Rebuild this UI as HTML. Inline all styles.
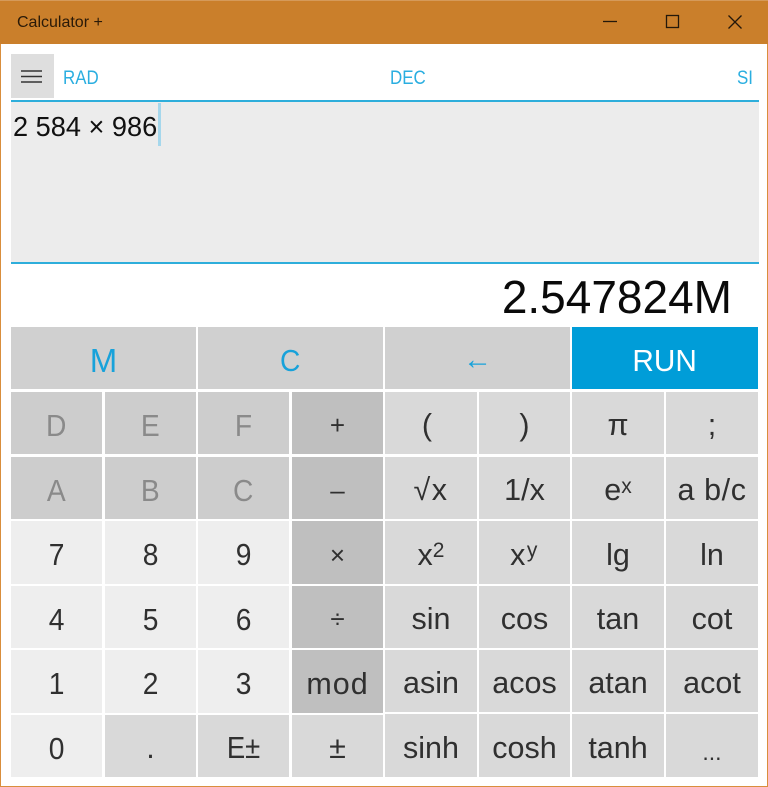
<!DOCTYPE html>
<html><head><meta charset="utf-8">
<style>
html,body{margin:0;padding:0;background:#fff}
body{width:768px;height:787px;position:relative;overflow:hidden;font-family:"Liberation Sans",sans-serif;color:#1a1a1a}
div{position:absolute;box-sizing:border-box}
.b{display:flex;align-items:center;justify-content:center;font-size:30.500px;white-space:nowrap;color:#303030;padding-top:5px}
.g{background:#d9d9d9}.l{background:#eeeeee}.d{background:#bfbfbf}.h{background:#cdcdcd}.m{background:#d0d0d0;color:#18a2da}
.h{color:#8a8a8a}
.o{font-size:26px}
.s{display:inline-block;font-size:31px;transform:scaleX(.91)}
sup{font-size:21px;line-height:0;position:relative;top:-4px;vertical-align:super}
.t{color:#2aaee0;font-size:19px;line-height:24px;transform-origin:0 50%;transform:scaleX(.89)}
.c1{left:11px;width:91px}.c2{left:105px;width:91px}.c3{left:198px;width:91px}.c4{left:292px;width:91px}
.c5{left:385px;width:92px}.c6{left:479px;width:91px}.c7{left:572px;width:92px}.c8{left:666px;width:92px}
.r1{top:392px;height:62px}.r2{top:457px;height:62px}.r3{top:521px;height:63px}.r4{top:586px;height:62px}.r5{top:650px;height:63px}.r6{top:715px;height:62px}
.c5.r5,.c6.r5,.c7.r5,.c8.r5{height:62px}
.c5.r6,.c6.r6,.c7.r6,.c8.r6{top:714px;height:63px}
</style></head><body>
<div style="left:0;top:0;width:768px;height:787px;border:1px solid #d98e3c;border-top:0"></div>
<div style="left:0;top:0;width:768px;height:44px;background:#ca7f2b;border-top:1px solid #d59a5a"></div>
<div style="left:17px;top:13px;font-size:16px;line-height:20px;color:#2a1a08">Calculator +</div>
<svg style="position:absolute;left:600px;top:10px" width="160" height="26" fill="none" stroke="#24180a" stroke-width="1.300">
<path d="M3 11.500H17"/><rect x="66.500" y="5.500" width="12" height="12"/><path d="M128.500 5.500L141.500 18.500M141.500 5.500L128.500 18.500"/></svg>

<div style="left:11px;top:54px;width:43px;height:44px;background:#dedede"></div>
<svg style="position:absolute;left:21px;top:70px" width="22" height="14" stroke="#333" stroke-width="1.600"><path d="M0 1H21M0 6.500H21M0 12H21"/></svg>
<div class="t" style="left:63px;top:67px">RAD</div>
<div class="t" style="left:390px;top:67px">DEC</div>
<div class="t" style="left:737px;top:67px">SI</div>
<div style="left:11px;top:100px;width:748px;height:164px;background:#ececec;border-top:2px solid #2eaedb;border-bottom:2px solid #2eaedb"></div>
<div style="left:13px;top:110px;font-size:28px;line-height:34px;color:#111;transform-origin:0 50%;transform:scaleX(.97);white-space:nowrap">2 584 × 986</div>
<div style="left:158px;top:103px;width:3px;height:43px;background:#a5d7ec"></div>
<div style="right:36px;top:269px;font-size:46px;line-height:56px;color:#0a0a0a">2.547824M</div>

<div class="b m" style="left:11px;top:327px;width:185px;height:62px;font-size:33px">M</div>
<div class="b m" style="left:198px;top:327px;width:185px;height:62px"><span class="s">C</span></div>
<div class="b m" style="left:385px;top:327px;width:185px;height:62px;font-size:29px">←</div>
<div class="b" style="left:572px;top:327px;width:186px;height:62px;background:#009dd8;color:#fff"><span class="s" style="transform:scaleX(.96)">RUN</span></div>

<div class="b h c1 r1"><span class="s">D</span></div><div class="b h c2 r1"><span class="s">E</span></div><div class="b h c3 r1"><span class="s">F</span></div><div class="b d o c4 r1">+</div>
<div class="b g c5 r1"><span style="margin-right:8px">(</span></div><div class="b g c6 r1">)</div><div class="b g c7 r1">π</div><div class="b g c8 r1">;</div>

<div class="b h c1 r2"><span class="s">A</span></div><div class="b h c2 r2"><span class="s">B</span></div><div class="b h c3 r2"><span class="s">C</span></div><div class="b d o c4 r2">–</div>
<div class="b g c5 r2" style="letter-spacing:1.500px">√x</div><div class="b g c6 r2">1/x</div><div class="b g c7 r2">e<sup>x</sup></div><div class="b g c8 r2" style="letter-spacing:.6px">a b/c</div>

<div class="b l c1 r3"><span class="s">7</span></div><div class="b l c2 r3"><span class="s">8</span></div><div class="b l c3 r3"><span class="s">9</span></div><div class="b d o c4 r3">×</div>
<div class="b g c5 r3">x<sup>2</sup></div><div class="b g c6 r3" style="letter-spacing:1.500px">x<sup>y</sup></div><div class="b g c7 r3">lg</div><div class="b g c8 r3">ln</div>

<div class="b l c1 r4"><span class="s">4</span></div><div class="b l c2 r4"><span class="s">5</span></div><div class="b l c3 r4"><span class="s">6</span></div><div class="b d o c4 r4">÷</div>
<div class="b g c5 r4">sin</div><div class="b g c6 r4">cos</div><div class="b g c7 r4">tan</div><div class="b g c8 r4">cot</div>

<div class="b l c1 r5"><span class="s">1</span></div><div class="b l c2 r5"><span class="s">2</span></div><div class="b l c3 r5"><span class="s">3</span></div><div class="b d c4 r5" style="letter-spacing:1px">mod</div>
<div class="b g c5 r5">asin</div><div class="b g c6 r5">acos</div><div class="b g c7 r5">atan</div><div class="b g c8 r5">acot</div>

<div class="b l c1 r6"><span class="s">0</span></div><div class="b g c2 r6">.</div><div class="b g c3 r6"><span style="display:inline-block;transform:scaleX(.9)">E±</span></div><div class="b g c4 r6">±</div>
<div class="b g c5 r6">sinh</div><div class="b g c6 r6">cosh</div><div class="b g c7 r6">tanh</div><div class="b g c8 r6" style="font-size:23px;padding-top:14px">...</div>
</body></html>
